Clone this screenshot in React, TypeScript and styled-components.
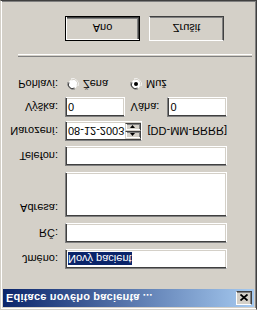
import React from 'react';
import styled, { createGlobalStyle } from 'styled-components';

const GlobalStyle = createGlobalStyle`
  html, body {
    margin: 0;
    padding: 0;
    background: #d4d0c8;
  }
  body {
    font-family: 'Liberation Sans', Arial, sans-serif;
    font-size: 11px;
    color: #000;
  }
`;

// the whole dialog is shown mirrored top-to-bottom in the reference
const Window = styled.div`
  width: 257px;
  height: 310px;
  box-sizing: border-box;
  background: #d4d0c8;
  border: 1px solid;
  border-color: #d4d0c8 #404040 #404040 #d4d0c8;
  box-shadow: inset 1px 1px #fff, inset -1px -1px #808080;
  padding: 2px;
  display: flex;
  flex-direction: column;
  transform: scaleY(-1);
`;

const TitleBar = styled.div`
  height: 18px;
  display: flex;
  align-items: center;
  justify-content: space-between;
  padding: 0 2px 0 3px;
  background: linear-gradient(to right, #0a246a, #a6caf0);
  color: #fff;
  font-weight: bold;
  letter-spacing: 0.2px;
`;

const CloseButton = styled.div`
  width: 16px;
  height: 14px;
  box-sizing: border-box;
  display: flex;
  align-items: center;
  justify-content: center;
  background: #d4d0c8;
  border: 1px solid;
  border-color: #fff #404040 #404040 #fff;
  box-shadow: inset -1px -1px #808080;
`;

const Form = styled.div`
  display: flex;
  flex-direction: column;
`;

const Row = styled.div<{ $gap: number; $h?: number }>`
  display: grid;
  grid-template-columns: 55px 162px;
  column-gap: 7px;
  margin-top: ${(p) => p.$gap}px;
  height: ${(p) => p.$h ?? 20}px;
`;

const Label = styled.div<{ $top?: boolean }>`
  text-align: right;
  align-self: ${(p) => (p.$top ? 'start' : 'center')};
  padding-top: ${(p) => (p.$top ? 3 : 0)}px;
  white-space: nowrap;
`;

const Sunken = styled.div<{ $w?: number }>`
  box-sizing: border-box;
  width: ${(p) => (p.$w ? `${p.$w}px` : '100%')};
  height: 100%;
  background: #fff;
  border: 1px solid;
  border-color: #808080 #fff #fff #808080;
  box-shadow: inset 1px 1px #404040, inset -1px -1px #d4d0c8;
  display: flex;
  align-items: center;
  padding: 0 2px;
  white-space: nowrap;
`;

const Selected = styled.span`
  background: #0a246a;
  color: #fff;
  line-height: 13px;
`;

const Inline = styled.div`
  display: flex;
  align-items: center;
  white-space: nowrap;
`;

const SideLabel = styled.span`
  margin: 0 6px 0 6px;
  width: 31px;
`;

const DateBox = styled(Sunken)`
  padding: 0 0 0 2px;
  justify-content: space-between;
`;

const Spin = styled.div`
  display: flex;
  flex-direction: column;
  width: 16px;
  height: 16px;
`;

const SpinButton = styled.div`
  flex: 1;
  box-sizing: border-box;
  background: #d4d0c8;
  border: 1px solid;
  border-color: #d4d0c8 #404040 #404040 #d4d0c8;
  box-shadow: inset 1px 1px #fff, inset -1px -1px #808080;
  display: flex;
  align-items: center;
  justify-content: center;
`;

const Hint = styled.span`
  margin-left: 6px;
`;

const RadioItem = styled.div<{ $w?: number }>`
  display: flex;
  align-items: center;
  gap: 4px;
  width: ${(p) => (p.$w ? `${p.$w}px` : 'auto')};
  padding-left: 2px;
`;

const Separator = styled.div`
  margin: 20px 2px 0 15px;
  height: 1px;
  border-top: 1px solid #808080;
  border-bottom: 1px solid #fff;
`;

const ButtonRow = styled.div`
  display: flex;
  gap: 9px;
  margin: 13px 0 0 62px;
`;

const Button = styled.div<{ $default?: boolean }>`
  width: 75px;
  height: 25px;
  box-sizing: border-box;
  display: flex;
  align-items: center;
  justify-content: center;
  background: #d4d0c8;
  border: 1px solid;
  border-color: ${(p) => (p.$default ? '#000' : '#fff #404040 #404040 #fff')};
  box-shadow: ${(p) =>
    p.$default
      ? 'inset 1px 1px #fff, inset -1px -1px #404040, inset -2px -2px #808080'
      : 'inset -1px -1px #808080'};
`;

function Radio({ checked }: { checked?: boolean }) {
  return (
    <svg width="12" height="12" viewBox="0 0 12 12">
      <path d="M1 8 A5.5 5.5 0 0 1 8 1" fill="none" stroke="#808080" />
      <path d="M4 11 A5.5 5.5 0 0 0 11 4" fill="none" stroke="#fff" />
      <circle cx="6" cy="6" r="4.5" fill="#fff" />
      <path d="M2 7.5 A4 4 0 0 1 7.5 2" fill="none" stroke="#404040" />
      <path d="M4.5 10 A4 4 0 0 0 10 4.5" fill="none" stroke="#d4d0c8" />
      {checked && <circle cx="6" cy="6" r="2" fill="#000" />}
    </svg>
  );
}

function Arrow({ up }: { up?: boolean }) {
  return (
    <svg width="5" height="3" viewBox="0 0 5 3">
      <path d={up ? 'M2.5 0 L5 3 L0 3 Z' : 'M0 0 L5 0 L2.5 3 Z'} fill="#000" />
    </svg>
  );
}

export default function App() {
  return (
    <>
      <GlobalStyle />
      <Window>
        <TitleBar>
          <span>Editace nového pacienta ...</span>
          <CloseButton>
            <svg width="8" height="7" viewBox="0 0 8 7">
              <path d="M0.5 0.5 L7.5 6.5 M7.5 0.5 L0.5 6.5" stroke="#000" strokeWidth="1.8" />
            </svg>
          </CloseButton>
        </TitleBar>
        <Form>
          <Row $gap={20}>
            <Label>Jméno:</Label>
            <Sunken>
              <Selected>Nový pacient</Selected>
            </Sunken>
          </Row>
          <Row $gap={6}>
            <Label>RČ:</Label>
            <Sunken />
          </Row>
          <Row $gap={6} $h={45}>
            <Label $top>Adresa:</Label>
            <Sunken />
          </Row>
          <Row $gap={6}>
            <Label>Telefon:</Label>
            <Sunken />
          </Row>
          <Row $gap={5}>
            <Label>Narození:</Label>
            <Inline>
              <DateBox $w={80}>
                <span>08-12-2003</span>
                <Spin>
                  <SpinButton>
                    <Arrow up />
                  </SpinButton>
                  <SpinButton>
                    <Arrow />
                  </SpinButton>
                </Spin>
              </DateBox>
              <Hint>[DD-MM-RRRR]</Hint>
            </Inline>
          </Row>
          <Row $gap={4}>
            <Label>Výška:</Label>
            <Inline>
              <Sunken $w={60}>0</Sunken>
              <SideLabel>Váha:</SideLabel>
              <Sunken $w={60}>0</Sunken>
            </Inline>
          </Row>
          <Row $gap={6} $h={14}>
            <Label>Pohlaví:</Label>
            <Inline>
              <RadioItem $w={61}>
                <Radio />
                <span>Žena</span>
              </RadioItem>
              <RadioItem>
                <Radio checked />
                <span>Muž</span>
              </RadioItem>
            </Inline>
          </Row>
        </Form>
        <Separator />
        <ButtonRow>
          <Button $default>Ano</Button>
          <Button>Zrušit</Button>
        </ButtonRow>
      </Window>
    </>
  );
}
